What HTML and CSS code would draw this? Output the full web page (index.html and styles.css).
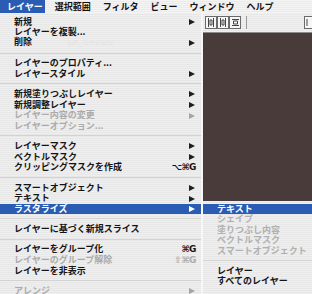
FILE: index.html
```html
<!DOCTYPE html>
<html lang="ja">
<head>
<meta charset="utf-8">
<link rel="stylesheet" href="styles.css">
</head>
<body>
<div class="screen">
  <div class="menubar">
    <span class="mb active">レイヤー</span>
    <span class="mb">選択範囲</span>
    <span class="mb">フィルタ</span>
    <span class="mb">ビュー</span>
    <span class="mb">ウィンドウ</span>
    <span class="mb">ヘルプ</span>
  </div>
  <div class="main">
    <div class="menu">
      <div class="item"><span class="label">新規</span><span class="arrow"></span></div>
      <div class="item"><span class="label">レイヤーを複製...</span></div>
      <div class="item"><span class="label">削除<span class="ghost">gift_template</span></span><span class="arrow"></span></div>
      <div class="sep"></div>
      <div class="item"><span class="label">レイヤーのプロパティ...</span></div>
      <div class="item"><span class="label">レイヤースタイル</span><span class="arrow"></span></div>
      <div class="sep"></div>
      <div class="item"><span class="label">新規塗りつぶしレイヤー</span><span class="arrow"></span></div>
      <div class="item"><span class="label">新規調整レイヤー</span><span class="arrow"></span></div>
      <div class="item disabled"><span class="label">レイヤー内容の変更</span><span class="arrow"></span></div>
      <div class="item disabled"><span class="label">レイヤーオプション...</span></div>
      <div class="sep"></div>
      <div class="item"><span class="label">レイヤーマスク</span><span class="arrow"></span></div>
      <div class="item"><span class="label">ベクトルマスク</span><span class="arrow"></span></div>
      <div class="item"><span class="label">クリッピングマスクを作成</span><span class="key">⌥⌘G</span></div>
      <div class="sep"></div>
      <div class="item"><span class="label">スマートオブジェクト</span><span class="arrow"></span></div>
      <div class="item"><span class="label">テキスト</span><span class="arrow"></span></div>
      <div class="item highlight has-sub"><span class="label">ラスタライズ</span><span class="arrow"></span>
        <div class="submenu">
          <div class="sitem highlight">テキスト</div>
          <div class="sitem disabled">シェイプ</div>
          <div class="sitem disabled">塗りつぶし内容</div>
          <div class="sitem disabled">ベクトルマスク</div>
          <div class="sitem disabled">スマートオブジェクト</div>
          <div class="ssep"></div>
          <div class="sitem">レイヤー</div>
          <div class="sitem">すべてのレイヤー</div>
        </div>
      </div>
      <div class="sep"></div>
      <div class="item"><span class="label">レイヤーに基づく新規スライス</span></div>
      <div class="sep"></div>
      <div class="item"><span class="label">レイヤーをグループ化</span><span class="key">⌘G</span></div>
      <div class="item disabled"><span class="label">レイヤーのグループ解除</span><span class="key">⇧⌘G</span></div>
      <div class="item"><span class="label">レイヤーを非表示</span></div>
      <div class="sep"></div>
      <div class="item disabled"><span class="label">アレンジ</span><span class="arrow"></span></div>
    </div>
    <div class="workspace">
      <div class="toolbar">
        <svg class="tools" width="44" height="13" viewBox="0 0 44 13">
          <g fill="#f6f6f6" stroke="#6a6a6a" stroke-width="1">
            <rect x="0.5" y="0.5" width="11" height="12"/>
            <rect x="12.5" y="0.5" width="11" height="12"/>
            <rect x="24.5" y="0.5" width="11" height="12"/>
          </g>
          <g stroke="#444" stroke-width="1" fill="none">
            <path d="M3.5 2v9M8.5 2v9M5 4h2v5h-2z"/>
            <path d="M15.5 2v9M20.5 2v9M17 4h2v5h-2z"/>
            <path d="M27 3.5h7M27 9.5h7M28.5 5h4v3h-4z"/>
          </g>
          <path d="M41.5 0v13" stroke="#9a9a9a"/>
        </svg>
        <svg class="tool-right" width="8" height="13" viewBox="0 0 8 13">
          <rect x="0.5" y="0.5" width="9" height="12" fill="#f6f6f6" stroke="#6a6a6a"/>
          <path d="M3 3v7" stroke="#444"/>
        </svg>
      </div>
      <div class="canvas"></div>
    </div>
  </div>
</div>
</body>
</html>
```

FILE: styles.css
```css
html, body {
  margin: 0;
  padding: 0;
}

body {
  width: 312px;
  height: 294px;
  overflow: hidden;
  font-family: "Noto Sans CJK JP", "DejaVu Sans", sans-serif;
  font-size: 9px;
  font-weight: 700;
  color: #141414;
}

.screen {
  width: 312px;
  height: 294px;
  overflow: hidden;
  display: flex;
  flex-direction: column;
}

.menubar {
  flex: none;
  height: 13px;
  line-height: 13px;
  display: flex;
  white-space: nowrap;
  background: repeating-linear-gradient(to bottom, #f4f4f4 0 1px, #ebebeb 1px 2px);
}

.mb {
  padding: 0 5px 0 7px;
}

.mb.active {
  background: #2b5cb3;
  color: #fff;
  padding-right: 2px;
  margin-right: 3px;
}

.main {
  flex: 1;
  min-height: 0;
  display: flex;
}

.menu {
  flex: none;
  width: 201px;
  padding-top: 3.75px;
  border-right: 2px solid #f6f6f6;
  background: repeating-linear-gradient(to bottom, #efefef 0 1px, #e7e7e7 1px 2px);
}

.item {
  position: relative;
  height: 10.6px;
  line-height: 10.6px;
  display: flex;
  align-items: center;
  padding: 0 5px 0 14px;
  white-space: nowrap;
}

.label {
  flex: 1;
}

.ghost {
  margin-left: 35px;
  font-family: "DejaVu Sans", sans-serif;
  font-weight: 400;
  font-size: 7px;
  color: rgba(0, 0, 0, 0.07);
}

.key {
  font-family: "DejaVu Sans", sans-serif;
  font-size: 9px;
  letter-spacing: -0.5px;
}

.arrow {
  width: 0;
  height: 0;
  margin-right: 1px;
  border-left: 6px solid #1e1e1e;
  border-top: 3.5px solid transparent;
  border-bottom: 3.5px solid transparent;
}

.sep {
  position: relative;
  height: 9.7px;
}

.sep::after {
  content: "";
  position: absolute;
  left: 0;
  right: 0;
  top: 4px;
  border-top: 1px solid #d3d3d3;
}

.disabled {
  color: #ababab;
}

.disabled .arrow {
  border-left-color: #a4a4a4;
}

.highlight {
  background: #2b5cb3;
  color: #fff;
}

.highlight .arrow {
  border-left-color: #fff;
}

.submenu {
  position: absolute;
  z-index: 2;
  left: calc(100% + 1px);
  top: -3px;
  width: 112px;
  height: 100px;
  padding-top: 3px;
  border-left: 1px solid #f8f8f8;
  background: repeating-linear-gradient(to bottom, #efefef 0 1px, #e7e7e7 1px 2px);
  color: #141414;
}

.sitem {
  height: 10.5px;
  line-height: 10.5px;
  padding-left: 14px;
  white-space: nowrap;
}

.sitem.highlight {
  color: #fff;
}

.sitem.disabled {
  color: #b0b0b0;
}

.ssep {
  position: relative;
  height: 9.5px;
}

.ssep::after {
  content: "";
  position: absolute;
  left: 0;
  right: 0;
  top: 4px;
  border-top: 1px solid #d3d3d3;
}

.workspace {
  flex: 1;
  display: flex;
  flex-direction: column;
}

.toolbar {
  flex: none;
  height: 19px;
  display: flex;
  align-items: center;
  justify-content: space-between;
  padding-left: 2px;
  border-bottom: 1px solid #8a8a8a;
  background: repeating-linear-gradient(to bottom, #f0f0f0 0 1px, #e8e8e8 1px 2px);
}

.canvas {
  flex: 1;
  background: #4a3b3b;
}
```
